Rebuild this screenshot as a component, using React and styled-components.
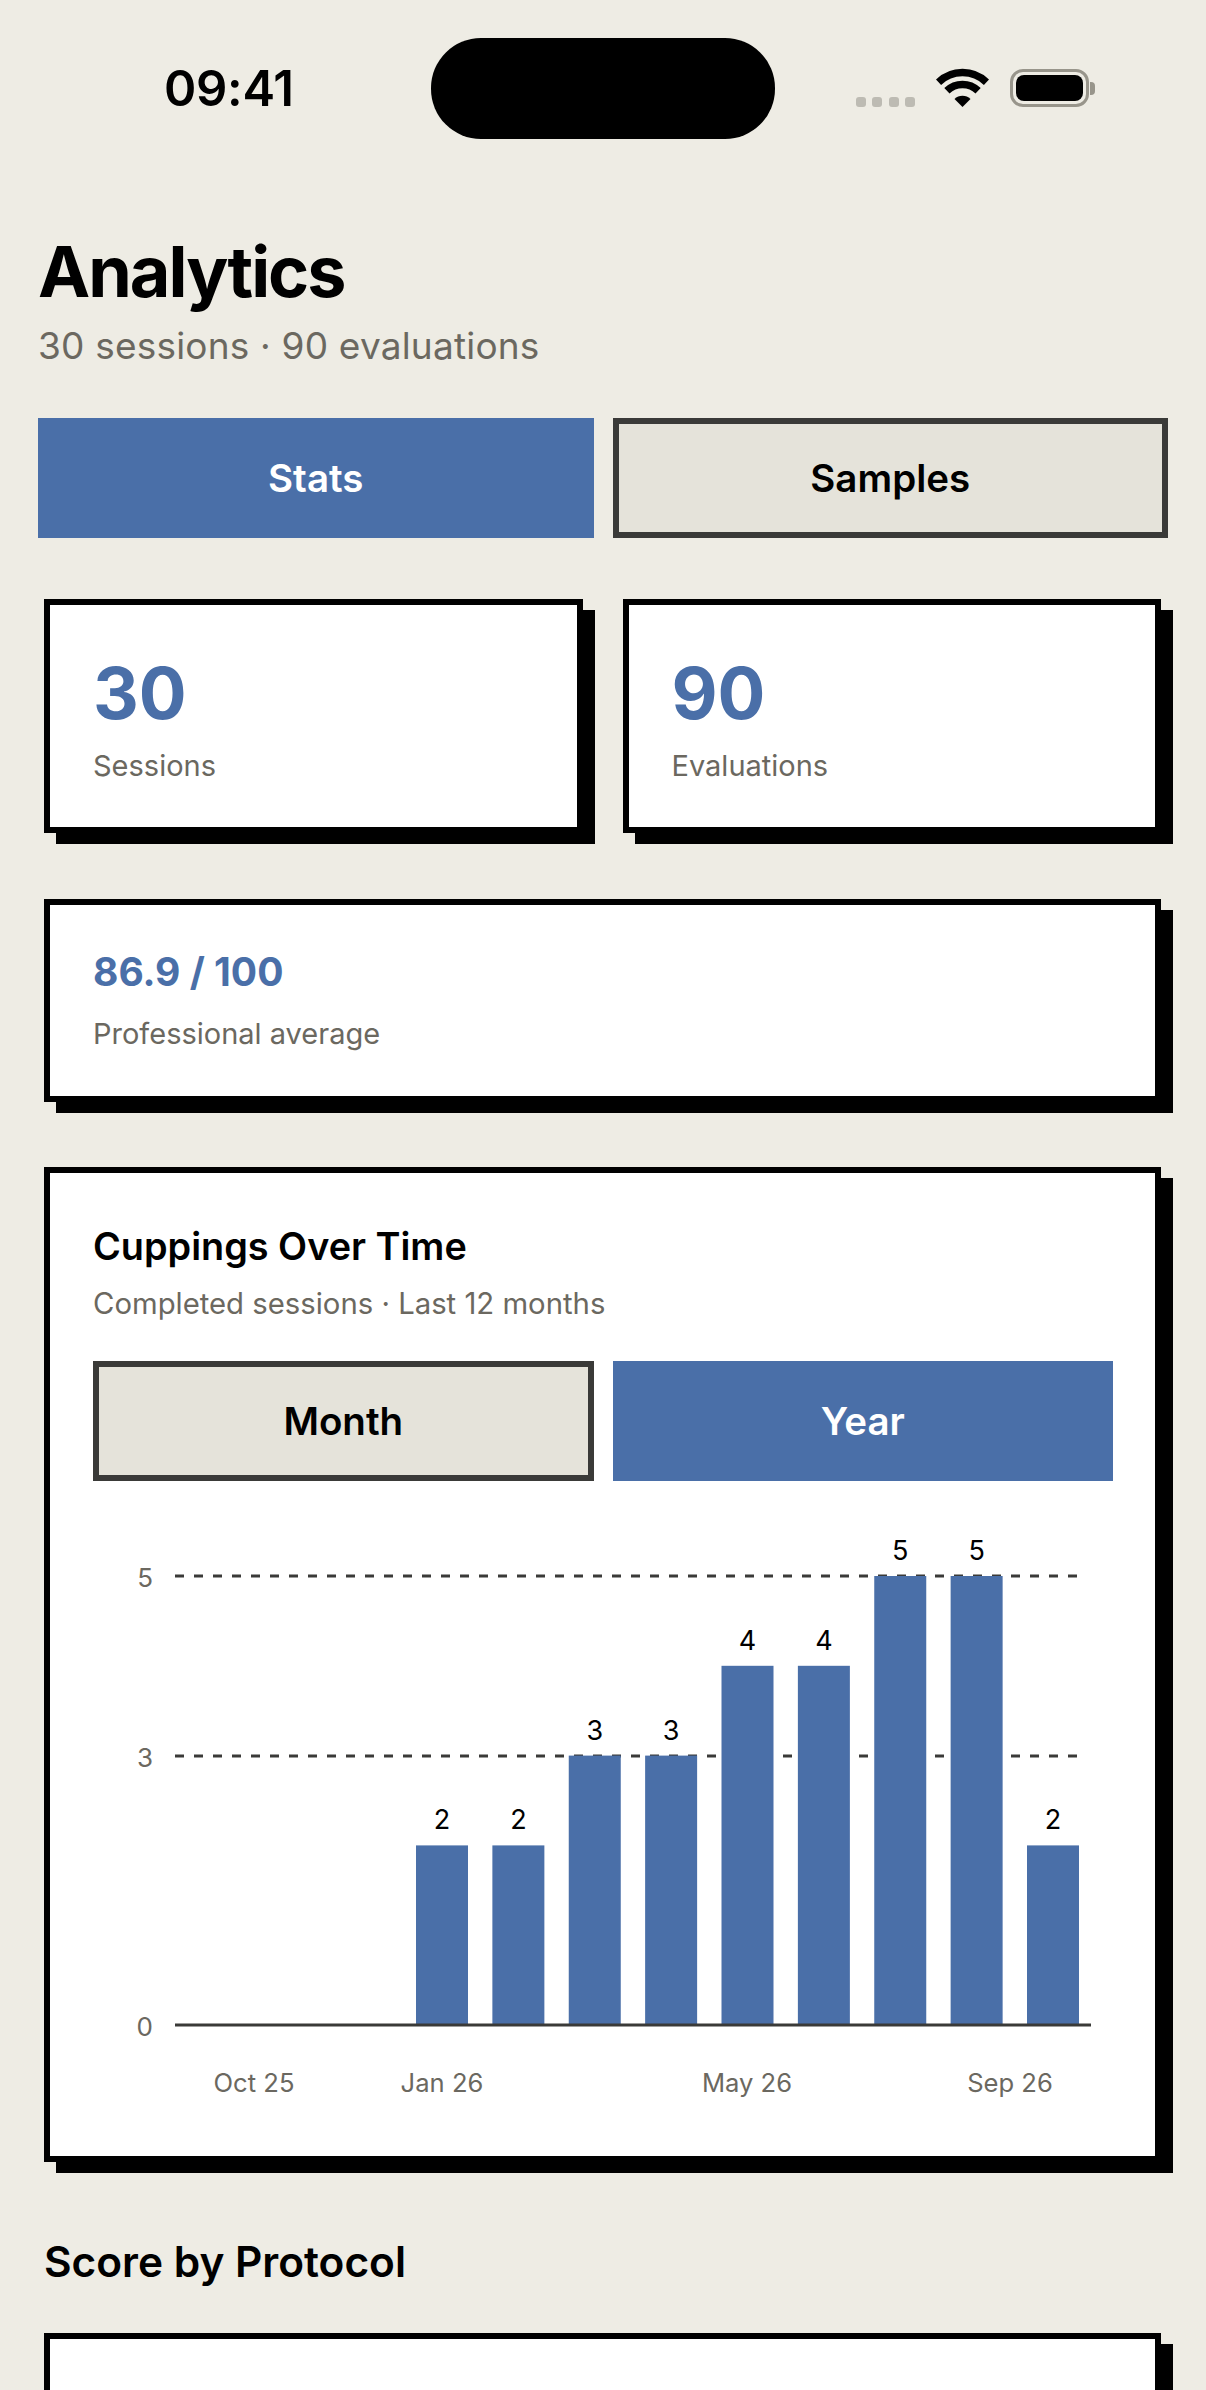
import React from "react";
import styled, { createGlobalStyle } from "styled-components";

const BG = "#eeece4";
const BLUE = "#4a6fa8";
const MUTED = "#6b6860";
const INK = "#3a3a38";

const Global = createGlobalStyle`
  html, body { margin: 0; padding: 0; background: ${BG}; }
  * { box-sizing: border-box; }
  body { font-family: Inter, "Liberation Sans", sans-serif; color: #000; }
`;

const Page = styled.div`
  width: 1206px;
  height: 2390px;
  overflow: hidden;
  background: ${BG};
`;

const StatusBar = styled.div`
  display: grid;
  grid-template-columns: 431px 344px 1fr;
  height: 138px;
  padding-top: 38px;
`;

const Time = styled.div`
  height: 100px;
  padding-left: 164px;
  font-size: 49px;
  line-height: 102px;
  font-weight: 600;
  letter-spacing: -0.3px;
`;

const Island = styled.div`
  width: 344px;
  height: 101px;
  border-radius: 50px;
  background: #000;
`;

const StatusIcons = styled.div`
  display: flex;
  align-items: flex-end;
  height: 69px;
  padding-left: 81px;
`;

const SignalDots = styled.div`
  display: flex;
  gap: 6.4px;
  margin-right: 21px;
`;

const SignalDot = styled.span`
  width: 10px;
  height: 10px;
  border-radius: 3px;
  background: #bdbbb3;
`;

const WifiIcon = styled.svg`
  display: block;
  width: 53px;
  height: 39px;
  margin-right: 21px;
`;

const Battery = styled.div`
  display: flex;
  align-items: center;
  width: 85px;
  height: 38px;
`;

const BatteryShell = styled.div`
  width: 79px;
  height: 38px;
  padding: 3px;
  border: 3px solid #98958b;
  border-radius: 13px;
`;

const BatteryFill = styled.div`
  width: 100%;
  height: 100%;
  border-radius: 8px;
  background: #000;
`;

const BatteryNub = styled.div`
  width: 5px;
  height: 13px;
  margin-left: 1px;
  border-radius: 0 4px 4px 0;
  background: #98958b;
`;

const Content = styled.main`
  padding: 0 38px;
`;

const Title = styled.h1`
  margin: 94px 0 0;
  font-size: 70px;
  line-height: 80px;
  font-weight: 700;
  letter-spacing: -2px;
`;

const Subtitle = styled.p`
  margin: 12px 0 0;
  font-size: 37px;
  line-height: 44px;
  font-weight: 400;
  letter-spacing: 0.2px;
  color: ${MUTED};
`;

const Toggle = styled.div`
  display: grid;
  grid-template-columns: 1fr 1fr;
  gap: 19px;
  margin-top: ${(p) => p.$top}px;
`;

const ToggleButton = styled.button`
  height: 120px;
  padding: 0;
  border: 6px solid ${(p) => (p.$active ? BLUE : INK)};
  border-radius: 0;
  background: ${(p) => (p.$active ? BLUE : "#e5e3da")};
  color: ${(p) => (p.$active ? "#fff" : "#000")};
  font-family: inherit;
  font-size: 38.5px;
  font-weight: 600;
`;

const Cards = styled.div`
  display: grid;
  grid-template-columns: 1fr 1fr;
  gap: 40px;
  margin: 61px 7px 0 6px;
`;

const Card = styled.section`
  border: 6px solid #000;
  background: #fff;
  box-shadow: 12px 11px 0 #000;
`;

const StatCard = styled(Card)`
  height: 234px;
  padding: 46px 43px 0;
`;

const StatValue = styled.div`
  font-size: 71px;
  line-height: 84px;
  font-weight: 700;
  color: ${BLUE};
`;

const StatLabel = styled.div`
  margin-top: ${(p) => p.$top}px;
  font-size: 29px;
  line-height: 36px;
  color: ${MUTED};
`;

const Wide = styled.div`
  margin: ${(p) => p.$top}px 7px 0 6px;
`;

const ScoreCard = styled(Card)`
  height: 203px;
  padding: 43px 43px 0;
`;

const ScoreValue = styled.div`
  font-size: 39px;
  line-height: 48px;
  font-weight: 700;
  color: ${BLUE};
`;

const ChartCard = styled(Card)`
  height: 995px;
  padding: 49px 42px 0 43px;
`;

const ChartTitle = styled.h2`
  margin: 0;
  font-size: 37.8px;
  line-height: 48px;
  font-weight: 600;
`;

const ChartSub = styled.p`
  margin: 16px 0 0;
  font-size: 29.3px;
  line-height: 36px;
  color: ${MUTED};
`;

const ChartSvg = styled.svg`
  display: block;
  width: 1020px;
  height: 600px;
  margin-top: 39px;
`;

const AxisLabel = styled.text`
  font-family: Inter, "Liberation Sans", sans-serif;
  font-size: ${(p) => p.$size}px;
  fill: ${MUTED};
`;

const BarValue = styled.text`
  font-family: Inter, "Liberation Sans", sans-serif;
  font-size: 27px;
  fill: #000;
`;

const SectionTitle = styled.h2`
  margin: 74px 0 0 6px;
  font-size: 42.4px;
  line-height: 52px;
  font-weight: 600;
`;

const EmptyCard = styled(Card)`
  height: 200px;
`;

const BAR_W = 52;
const STEP = 76.375;
const X0 = 416;
const BASE = 2025;
const UNIT = 89.8;
const bars = [2, 2, 3, 3, 4, 4, 5, 5, 2];
const yTicks = [
  { v: 5, y: 1576 },
  { v: 3, y: 1756 },
  { v: 0, y: 2025 },
];
const xLabels = [
  { t: "Oct 25", x: 254 },
  { t: "Jan 26", x: 442 },
  { t: "May 26", x: 747 },
  { t: "Sep 26", x: 1010 },
];

function Chart() {
  return (
    <ChartSvg viewBox="93 1520 1020 600">
      {[1576, 1756].map((y) => (
        <line key={y} x1="175" x2="1086" y1={y} y2={y} stroke={INK} strokeWidth="3" strokeDasharray="9 10" />
      ))}
      {bars.map((v, i) => {
        const x = X0 + i * STEP;
        const h = v * UNIT;
        return (
          <g key={i}>
            <rect x={x} y={BASE - h} width={BAR_W} height={h} fill={BLUE} />
            <BarValue x={x + BAR_W / 2} y={BASE - h - 16} textAnchor="middle">{v}</BarValue>
          </g>
        );
      })}
      <line x1="175" x2="1091" y1={BASE} y2={BASE} stroke={INK} strokeWidth="3" />
      {yTicks.map((t) => (
        <AxisLabel key={t.v} $size={26} x="153" y={t.y + 10.5} textAnchor="end">{t.v}</AxisLabel>
      ))}
      {xLabels.map((l) => (
        <AxisLabel key={l.t} $size={25.6} x={l.x} y="2092" textAnchor="middle">{l.t}</AxisLabel>
      ))}
    </ChartSvg>
  );
}

export default function App() {
  return (
    <Page>
      <Global />
      <StatusBar>
        <Time>09:41</Time>
        <Island />
        <StatusIcons>
          <SignalDots>
            <SignalDot /><SignalDot /><SignalDot /><SignalDot />
          </SignalDots>
          <WifiIcon viewBox="0 0 53 39">
            <path d="M2.5 14.2A34.5 34.5 0 0 1 50.5 14.2" fill="none" stroke="#000" strokeWidth="7.5" />
            <path d="M10.9 22.8A22.5 22.5 0 0 1 42.1 22.8" fill="none" stroke="#000" strokeWidth="7.5" />
            <path d="M26.5 39L18.5 31A11.5 11.5 0 0 1 34.5 31Z" fill="#000" />
          </WifiIcon>
          <Battery>
            <BatteryShell><BatteryFill /></BatteryShell>
            <BatteryNub />
          </Battery>
        </StatusIcons>
      </StatusBar>
      <Content>
        <Title>Analytics</Title>
        <Subtitle>30 sessions · 90 evaluations</Subtitle>
        <Toggle $top={50}>
          <ToggleButton $active>Stats</ToggleButton>
          <ToggleButton>Samples</ToggleButton>
        </Toggle>
        <Cards>
          <StatCard>
            <StatValue>30</StatValue>
            <StatLabel $top={13}>Sessions</StatLabel>
          </StatCard>
          <StatCard>
            <StatValue>90</StatValue>
            <StatLabel $top={13}>Evaluations</StatLabel>
          </StatCard>
        </Cards>
        <Wide $top={66}>
          <ScoreCard>
            <ScoreValue>86.9 / 100</ScoreValue>
            <StatLabel $top={20}>Professional average</StatLabel>
          </ScoreCard>
        </Wide>
        <Wide $top={65}>
          <ChartCard>
            <ChartTitle>Cuppings Over Time</ChartTitle>
            <ChartSub>Completed sessions · Last 12 months</ChartSub>
            <Toggle $top={39}>
              <ToggleButton>Month</ToggleButton>
              <ToggleButton $active>Year</ToggleButton>
            </Toggle>
            <Chart />
          </ChartCard>
        </Wide>
        <SectionTitle>Score by Protocol</SectionTitle>
        <Wide $top={45}>
          <EmptyCard />
        </Wide>
      </Content>
    </Page>
  );
}
